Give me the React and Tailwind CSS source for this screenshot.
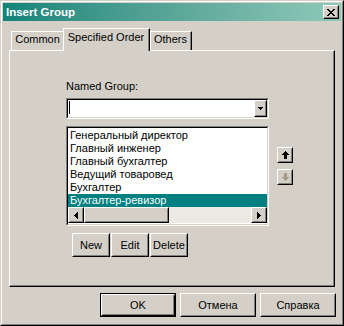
import React from "react";

function PixelArt({ art, color }) {
  const h = art.length;
  const w = art[0].length;
  const rects = [];
  art.forEach((row, y) =>
    [...row].forEach((c, x) => {
      if (c === "#") rects.push(<rect key={`${x}-${y}`} x={x} y={y} width="1" height="1" />);
    })
  );
  return (
    <svg width={w} height={h} viewBox={`0 0 ${w} ${h}`} fill={color} shapeRendering="crispEdges">
      {rects}
    </svg>
  );
}

const X_ART = [
  "##....##",
  ".##..##.",
  "..####..",
  "...##...",
  "..####..",
  ".##..##.",
  "##....##",
];
const UP_ART = ["...#...", "..###..", ".#####.", "#######", "..###..", "..###..", "..###..", "..###.."];
const DOWN_ART = ["..###..", "..###..", "..###..", "..###..", "#######", ".#####.", "..###..", "...#..."];
const TRI_LEFT = ["...#", "..##", ".###", "####", ".###", "..##", "...#"];
const TRI_RIGHT = ["#...", "##..", "###.", "####", "###.", "##..", "#..."];

function Raised({ className = "", children, inner = "" }) {
  return (
    <div className={`flex border border-t-white border-l-white border-r-black border-b-black bg-[#d4d0c8] ${className}`}>
      <div className={`flex flex-1 items-center justify-center border border-t-[#d4d0c8] border-l-[#d4d0c8] border-r-[#808080] border-b-[#808080] ${inner}`}>
        {children}
      </div>
    </div>
  );
}

function Sunken({ className = "", children, inner = "" }) {
  return (
    <div className={`flex border border-t-[#808080] border-l-[#808080] border-r-white border-b-white ${className}`}>
      <div className={`flex flex-1 border border-t-black border-l-black border-r-[#d4d0c8] border-b-[#d4d0c8] bg-white ${inner}`}>
        {children}
      </div>
    </div>
  );
}

const items = [
  "Генеральный директор",
  "Главный инженер",
  "Главный бухгалтер",
  "Ведущий товаровед",
  "Бухгалтер",
  "Бухгалтер-ревизор",
];

export default function App() {
  return (
    <div className="w-[344px] h-[326px] bg-[#d4d0c8] font-['Liberation_Sans',Arial,sans-serif] text-[11px] leading-[13px] text-black select-none">
      <div className="w-full h-full border border-t-[#d4d0c8] border-l-[#d4d0c8] border-r-black border-b-black">
        <div className="w-full h-full border border-t-white border-l-white border-r-[#808080] border-b-[#808080] p-px flex flex-col">
          {/* Title bar */}
          <div className="h-[18px] flex items-center bg-linear-to-r from-[#0f847a] to-[#8fc9b9] pl-[3px] pr-[2px]">
            <span className="text-white font-bold text-[11.5px] leading-[13px]">Insert Group</span>
            <Raised className="ml-auto w-[16px] h-[14px]">
              <PixelArt art={X_ART} color="#000" />
            </Raised>
          </div>

          {/* Tabs + panel */}
          <div className="mx-[6px] mt-[7px] flex flex-col">
            <div className="flex items-end h-[22px] pl-[2px]">
              <div className="w-[52px] h-[19px] border-t border-l border-white flex justify-center pt-px">
                <span>Common</span>
              </div>
              <div className="relative z-10 -mb-px w-[87px] h-[23px] bg-[#d4d0c8] border-t border-l border-t-white border-l-white border-r border-r-black">
                <div className="h-full border-r border-r-[#808080] flex justify-center pt-[2px]">
                  <span>Specified Order</span>
                </div>
              </div>
              <div className="w-[42px] h-[19px] border-t border-l border-t-white border-l-white border-r border-r-black">
                <div className="h-full border-r border-r-[#808080] flex justify-center pt-px">
                  <span>Others</span>
                </div>
              </div>
            </div>

            <div className="h-[237px] border border-t-white border-l-white border-r-black border-b-black">
              <div className="h-full border-r border-b border-r-[#808080] border-b-[#808080] pl-[56px] pt-[29px]">
                <div className="flex">
                  <div className="flex flex-col w-[203px]">
                    <div>Named Group:</div>
                    <Sunken className="mt-[5px] h-[21px]">
                      <div className="relative flex-1">
                        <div className="absolute left-px top-px w-px h-[13px] bg-black" />
                      </div>
                      <Raised className="w-[13px]">
                        <PixelArt art={["#####", ".###.", "..#.."]} color="#000" />
                      </Raised>
                    </Sunken>
                    <Sunken className="mt-[7px] h-[100px]" inner="flex-col">
                      <div className="h-[79px] pt-px flex flex-col">
                        {items.map((t, i) => (
                          <div
                            key={t}
                            className={`h-[13px] pl-[2px] whitespace-nowrap ${i === 5 ? "bg-[#008080] text-white" : ""}`}
                          >
                            {t}
                          </div>
                        ))}
                      </div>
                      <div className="h-[16px] flex bg-[#ece9e2]">
                        <Raised className="w-[16px]">
                          <PixelArt art={TRI_LEFT} color="#000" />
                        </Raised>
                        <Raised className="w-[85px]" />
                        <div className="flex-1" />
                        <Raised className="w-[16px]">
                          <PixelArt art={TRI_RIGHT} color="#000" />
                        </Raised>
                      </div>
                    </Sunken>
                  </div>
                  <div className="ml-[8px] mt-[67px] flex flex-col gap-[6px]">
                    <Raised className="w-[16px] h-[16px]">
                      <PixelArt art={UP_ART} color="#000" />
                    </Raised>
                    <Raised className="w-[16px] h-[16px]">
                      <PixelArt art={DOWN_ART} color="#a89c88" />
                    </Raised>
                  </div>
                </div>
                <div className="flex gap-px ml-[6px] mt-[7px]">
                  <Raised className="w-[38px] h-[24px]">New</Raised>
                  <Raised className="w-[38px] h-[24px]">Edit</Raised>
                  <Raised className="w-[38px] h-[24px]">Delete</Raised>
                </div>
              </div>
            </div>
          </div>

          {/* Bottom buttons */}
          <div className="flex justify-end gap-[4px] mt-[6px] pr-[5px]">
            <div className="flex w-[76px] h-[24px] border border-black">
              <Raised className="flex-1">OK</Raised>
            </div>
            <Raised className="w-[76px] h-[24px]">Отмена</Raised>
            <Raised className="w-[76px] h-[24px]">Справка</Raised>
          </div>
        </div>
      </div>
    </div>
  );
}
